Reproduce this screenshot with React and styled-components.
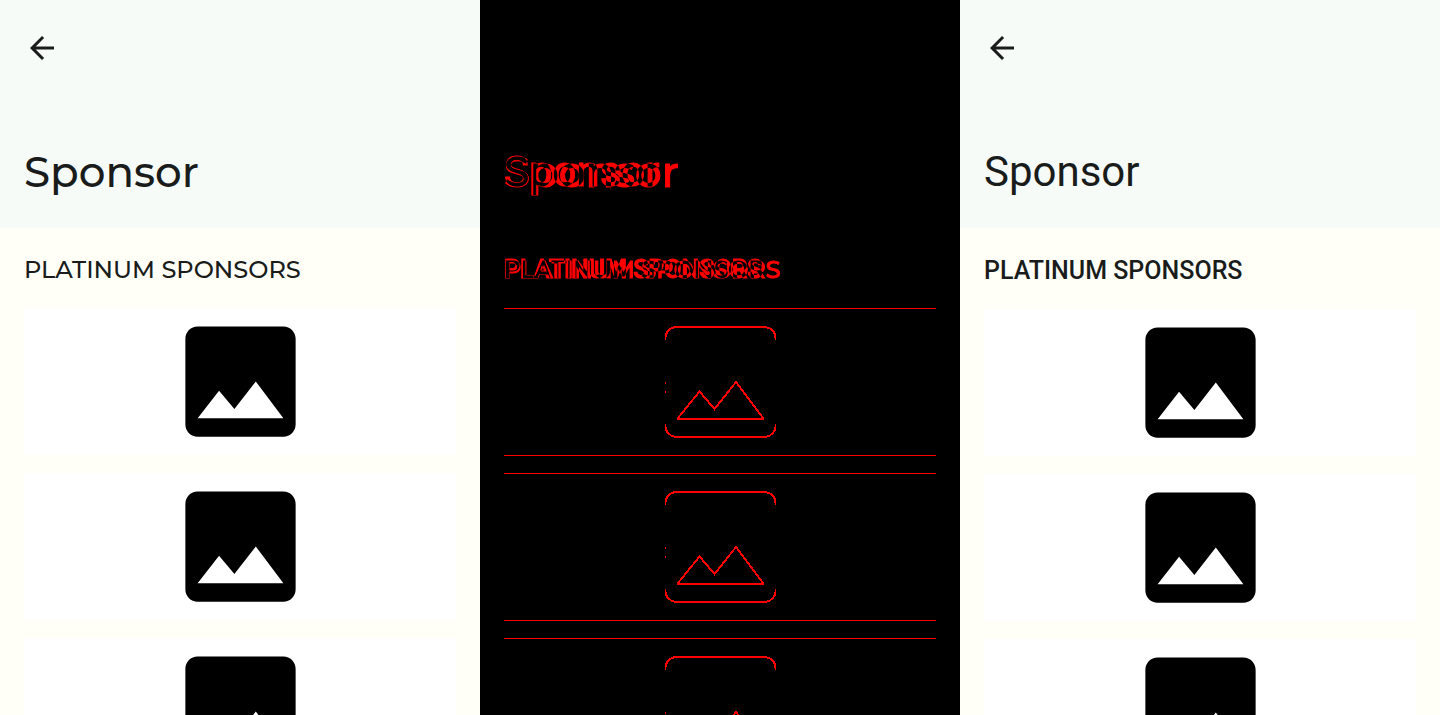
import React from "react";
import styled, { createGlobalStyle } from "styled-components";

const GlobalStyle = createGlobalStyle`
  *, *::before, *::after { box-sizing: border-box; }
  body { margin: 0; }
`;

const WIDE = `Montserrat, Inter, "DejaVu Sans", sans-serif`;
const PLAIN = `Roboto, "Liberation Sans", sans-serif`;

const Page = styled.main`
  display: grid;
  grid-template-columns: repeat(3, minmax(0, 1fr));
  height: 100vh;
  overflow: hidden;
`;

const Screen = styled.section`
  background: ${(p) => (p.$diff ? "#000" : "#fffff7")};
  color: ${(p) => (p.$diff ? "#f00" : "#191c1b")};
  overflow: hidden;
  isolation: isolate;
`;

const Header = styled.header`
  display: flex;
  flex-direction: column;
  justify-content: space-between;
  height: 228px;
  padding: 24px 24px 28px;
  background: ${(p) => (p.$diff ? "#000" : "#f6fbf8")};
`;

const BackButton = styled.button`
  display: flex;
  align-items: center;
  width: 48px;
  height: 48px;
  padding: 0;
  border: 0;
  background: none;
  color: inherit;
  cursor: pointer;
`;

const BackIcon = styled.svg`
  width: 36px;
  height: 36px;
  fill: currentColor;
`;

const Title = styled.h1`
  margin: 0;
  font-family: ${(p) => (p.$wide ? WIDE : PLAIN)};
  font-size: 42px;
  font-weight: ${(p) => (p.$wide ? 500 : 400)};
  line-height: 56px;
  white-space: nowrap;
`;

const Content = styled.div`
  display: flex;
  flex-direction: column;
  gap: 21px;
  padding: ${(p) => (p.$wide ? 25 : 26)}px 24px 0;
`;

const Subtitle = styled.h2`
  margin: 0;
  font-family: ${(p) => (p.$wide ? WIDE : PLAIN)};
  font-size: ${(p) => (p.$wide ? 24 : 25)}px;
  font-weight: 500;
  line-height: 34px;
  white-space: nowrap;
`;

const Overlay = styled.div`
  display: grid;
  margin-top: ${(p) => (p.$push ? "auto" : 0)};
  & > * {
    grid-area: 1 / 1;
    mix-blend-mode: difference;
    -webkit-text-stroke: 1px #f00;
  }
`;

const List = styled.ul`
  display: flex;
  flex-direction: column;
  gap: ${(p) => (p.$diff ? 17 : 18)}px;
  margin: 0;
  padding: 0;
  list-style: none;
`;

const Card = styled.li`
  display: flex;
  justify-content: center;
  height: ${(p) => (p.$diff ? 148 : 147)}px;
  background: ${(p) => (p.$diff ? "#000" : "#fff")};
  box-shadow: ${(p) => (p.$diff ? "inset 0 1px #f00, inset 0 -1px #f00" : "none")};
`;

const Picture = styled.svg`
  width: ${(p) => (p.$diff ? 148 : 147)}px;
  height: ${(p) => (p.$diff ? 148 : 147)}px;
  flex: none;
`;

const ROWS = [1, 2, 3];

function ImageGlyph() {
  return (
    <Picture viewBox="0 0 24 24" role="img" aria-label="Sponsor logo">
      <path d="M21 19V5c0-1.1-.9-2-2-2H5c-1.1 0-2 .9-2 2v14c0 1.1.9 2 2 2h14c1.1 0 2-.9 2-2zM8.5 13.5l2.5 3.01L14.5 12l4.5 6H5l3.5-4.5z" />
    </Picture>
  );
}

function ImageOutline() {
  return (
    <Picture $diff viewBox="0 0 148 148" fill="none" stroke="#f00" shapeRendering="crispEdges" aria-hidden="true">
      <path strokeWidth="2" d="M28 19H121M28 129H121" />
      <path strokeWidth="1.8" d="M19.500 32V30C19.500 24 24 19.500 30 19M119 19C125 19.500 129.500 24 129.500 30V32M19.500 116V118C19.500 124 24 128.500 30 129M119 129C125 128.500 129.500 124 129.500 118V116" />
      <path strokeWidth="2" d="M32 110L53.500 83.500L68.500 101L90 74L117 110" />
      <path strokeWidth="2" d="M31 111H118" />
      <path d="M19.500 74v2M19.500 83v2" />
    </Picture>
  );
}

function SponsorScreen({ wide }) {
  return (
    <Screen>
      <Header>
        <BackButton aria-label="Back">
          <BackIcon viewBox="0 0 24 24">
            <path d="M20 11H7.830l5.590-5.590L12 4l-8 8 8 8 1.410-1.410L7.830 13H20v-2z" />
          </BackIcon>
        </BackButton>
        <Title $wide={wide}>Sponsor</Title>
      </Header>
      <Content $wide={wide}>
        <Subtitle $wide={wide}>PLATINUM SPONSORS</Subtitle>
        <List>
          {ROWS.map((row) => (
            <Card key={row}>
              <ImageGlyph />
            </Card>
          ))}
        </List>
      </Content>
    </Screen>
  );
}

function DifferenceScreen() {
  return (
    <Screen $diff>
      <Header $diff>
        <Overlay $push>
          <Title $wide>Sponsor</Title>
          <Title aria-hidden="true">Sponsor</Title>
        </Overlay>
      </Header>
      <Content $wide>
        <Overlay>
          <Subtitle $wide>PLATINUM SPONSORS</Subtitle>
          <Subtitle aria-hidden="true">PLATINUM SPONSORS</Subtitle>
        </Overlay>
        <List $diff>
          {ROWS.map((row) => (
            <Card $diff key={row}>
              <ImageOutline />
            </Card>
          ))}
        </List>
      </Content>
    </Screen>
  );
}

export default function App() {
  return (
    <>
      <GlobalStyle />
      <Page>
        <SponsorScreen wide />
        <DifferenceScreen />
        <SponsorScreen />
      </Page>
    </>
  );
}
